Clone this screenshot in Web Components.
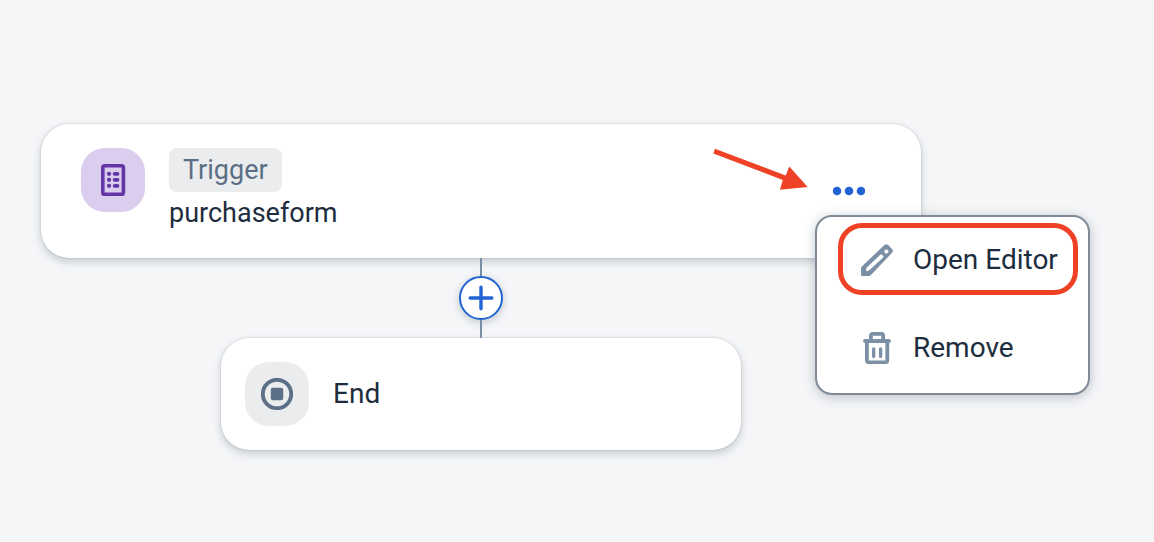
<!DOCTYPE html>
<html lang="en">
<head>
<meta charset="utf-8">
<meta name="viewport" content="width=device-width, initial-scale=1">
<title>Process flow</title>
<style>
html, body { margin: 0; min-height: 100%; background: #f5f6f8; }
body { font: 28px/42px Roboto, "Noto Sans", sans-serif; color: #1d2d3e; overflow-x: hidden; }
</style>
</head>
<body>
<process-flow>
  <trigger-node>
    <span slot="badge">Trigger</span>
    <span slot="name">purchaseform</span>
    <node-menu slot="actions"></node-menu>
    <pointer-arrow slot="note"></pointer-arrow>
  </trigger-node>
  <flow-connector></flow-connector>
  <end-node>End</end-node>
</process-flow>

<script>
const define = (name, html) => customElements.define(name, class extends HTMLElement {
  constructor() {
    super();
    const t = document.createElement('template');
    t.innerHTML = html;
    this.attachShadow({ mode: 'open' }).append(t.content.cloneNode(true));
  }
});

define('process-flow', `
<style>
:host { display: block; padding: 124px 40px 92px 41px; }
.column { display: flex; flex-direction: column; align-items: center; max-width: 880px; }
</style>
<main class="column"><slot></slot></main>`);

define('trigger-node', `
<style>
:host { display: block; width: 100%; }
article { position: relative; box-sizing: border-box; display: flex; align-items: center; gap: 24px; padding: 24px 56px 24px 40px; background: #fff; border-radius: 28px; box-shadow: 0 0 2px rgba(34,53,72,.24), 0 4px 8px rgba(34,53,72,.22); }
.icon { align-self: flex-start; display: grid; place-items: center; flex: none; width: 64px; height: 64px; border-radius: 24px; background: #dacdee; }
.text { flex: 1; display: flex; flex-direction: column; align-items: flex-start; font-size: 27px; }
.badge { padding: 0 14px; line-height: 44px; border-radius: 8px; background: #eaecee; color: #5b6f86; }
svg { display: block; }
</style>
<article>
  <div class="icon"><svg width="32" height="32" viewBox="0 0 32 32" fill="none" stroke="#6236a6" aria-hidden="true">
    <rect x="5.8" y="1.8" width="20.6" height="28.6" rx="1.8" stroke-width="3.6"/>
    <path d="M12 9.8h.1M12 15.8h.1M12 21.8h.1" stroke-width="4.2" stroke-linecap="round"/>
    <path d="M17.7 9.8h2.8M17.7 15.8h2.8M17.7 21.8h2.8" stroke-width="3.8" stroke-linecap="round"/>
  </svg></div>
  <div class="text"><span class="badge"><slot name="badge"></slot></span><slot name="name"></slot></div>
  <slot name="actions"></slot>
  <slot name="note"></slot>
</article>`);

define('node-menu', `
<style>
:host { position: relative; display: block; z-index: 2; }
.more { display: block; padding: 0; border: 0; background: none; cursor: pointer; }
svg { display: block; }
.menu { position: absolute; top: 40px; left: -18px; box-sizing: border-box; width: 275px; border: 2px solid #808b97; border-radius: 17px; background: #fff; box-shadow: 0 2px 12px rgba(34,53,72,.28); }
</style>
<button class="more" type="button" aria-label="More actions" aria-expanded="true">
  <svg width="32" height="32" viewBox="0 0 32 32" fill="#2364d4"><circle cx="4" cy="16" r="4.3"/><circle cx="16" cy="16" r="4.3"/><circle cx="28" cy="16" r="4.3"/></svg>
</button>
<div class="menu" role="menu">
  <menu-item marked>
    <svg slot="icon" width="32" height="32" viewBox="0 0 32 32" fill="#7b8fa5" fill-rule="evenodd" aria-hidden="true">
      <path d="M23.4.9q2-1.4 3.7 0l4.1 4.3q1.4 1.7 0 3.4L9.7 31.2Q8.8 32 7.6 32H1.3Q0 32 0 30.7v-6.1q0-1.2.9-2.1ZM5.8 23.5q-.7.8-.7 2v1.4h1.7q1 0 1.8-.8L22.1 13.5q.8-.9 0-1.7l-1.2-1.1q-.8-.7-1.6.1ZM23.3 7.5a2.1 2.1 0 1 0 4.2 0 2.1 2.1 0 1 0-4.2 0Z"/>
    </svg>Open Editor
  </menu-item>
  <menu-item>
    <svg slot="icon" width="32" height="32" viewBox="0 0 32 32" fill="none" stroke="#7b8fa5" stroke-width="3.8" stroke-linecap="round" stroke-linejoin="round" aria-hidden="true">
      <path d="M4 9h24M9.9 8V3.8q0-2 2-2h8.2q2 0 2 2V8M5.9 10v18.2q0 2.1 2.1 2.1h16.2q2.1 0 2.1-2.1V10"/>
      <path d="M12.7 16.8v7.6M19.6 16.8v7.6" stroke-width="3.3"/>
    </svg>Remove
  </menu-item>
</div>`);

define('menu-item', `
<style>
:host { position: relative; display: block; }
button { box-sizing: border-box; display: flex; align-items: center; gap: 20px; width: 100%; height: 88px; padding: 0 0 2px 44px; border: 0; background: none; color: #1d2d3e; font: inherit; text-align: left; white-space: nowrap; cursor: pointer; }
:host([marked])::after { content: ""; position: absolute; inset: 6px 10px 10px 21px; border: 5px solid #ee4126; border-radius: 24px; pointer-events: none; }
</style>
<button type="button" role="menuitem"><slot name="icon"></slot><span><slot></slot></span></button>`);

define('pointer-arrow', `
<style>
:host { position: absolute; top: 24px; right: 113px; pointer-events: none; }
svg { display: block; }
</style>
<svg width="96" height="44" viewBox="0 0 96 44" fill="#ee4126" aria-hidden="true"><path d="M2.9.8 1.4 5.5 70.8 32 68 41.8 95.7 39 77.3 18.5 73.7 27.5Z"/></svg>`);

define('flow-connector', `
<style>
:host { display: flex; flex-direction: column; align-items: center; z-index: 1; }
i { width: 2px; height: 18px; background: #788fa6; }
button { box-sizing: border-box; display: grid; place-items: center; width: 44px; height: 44px; padding: 0; border: 2px solid #2364d4; border-radius: 50%; background: #fff; box-shadow: 0 2px 8px rgba(34,53,72,.26); cursor: pointer; }
</style>
<i></i>
<button type="button" aria-label="Add step"><svg width="26" height="26" viewBox="0 0 26 26" fill="none" stroke="#2364d4" stroke-width="3.4" stroke-linecap="round"><path d="M13 2.2v21.6M2.2 13h21.6"/></svg></button>
<i></i>`);

define('end-node', `
<style>
:host { display: flex; align-items: center; gap: 24px; box-sizing: border-box; width: 100%; max-width: 520px; padding: 24px; border-radius: 28px; background: #fff; box-shadow: 0 0 2px rgba(34,53,72,.24), 0 4px 8px rgba(34,53,72,.22); }
.icon { display: grid; place-items: center; flex: none; width: 64px; height: 64px; border-radius: 24px; background: #eaecee; }
</style>
<div class="icon"><svg width="32" height="32" viewBox="0 0 32 32" fill="#5b6f86" aria-hidden="true"><circle cx="16" cy="16" r="14.2" fill="none" stroke="#5b6f86" stroke-width="3.8"/><rect x="9.8" y="9.8" width="12.4" height="12.4" rx="2"/></svg></div>
<slot></slot>`);
</script>
</body>
</html>
